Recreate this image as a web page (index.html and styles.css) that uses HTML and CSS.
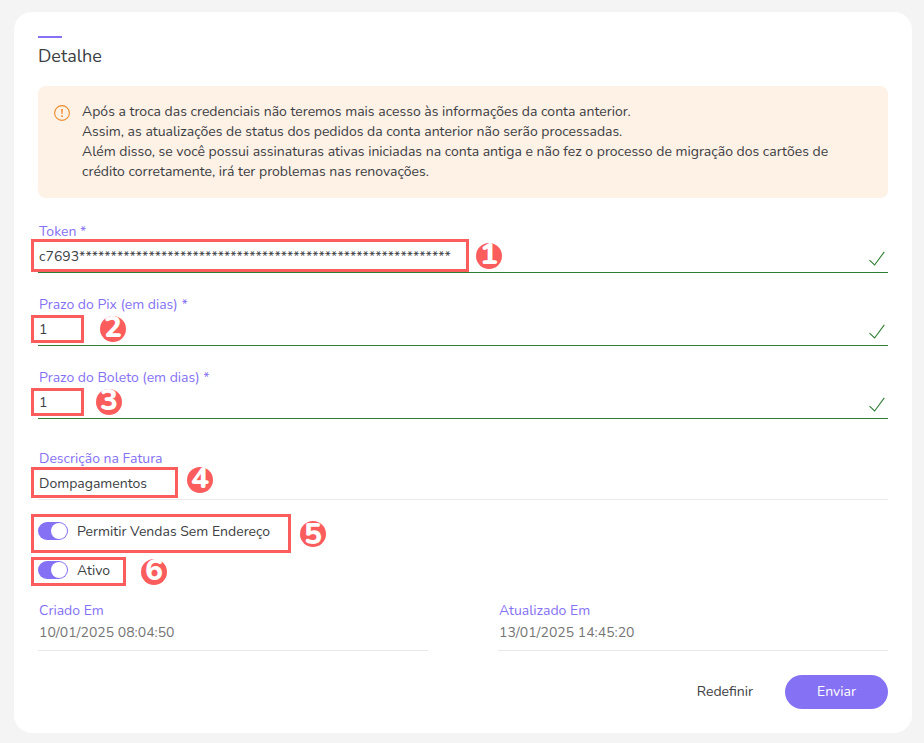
FILE: index.html
```html
<!DOCTYPE html>
<html lang="pt-BR">
<head>
<meta charset="utf-8">
<meta name="viewport" content="width=device-width, initial-scale=1">
<title>Detalhe</title>
<link rel="stylesheet" href="styles.css">
</head>
<body>
<main class="card">
  <h1 class="title">Detalhe</h1>

  <div class="alert" role="alert">
    <svg class="alert-icon" viewBox="0 0 16 16" aria-hidden="true">
      <circle cx="8" cy="8" r="7.4" fill="none" stroke="currentColor" stroke-width="1.1"/>
      <path d="M7.1 3.9h1.8l-.4 5.1h-1zM7.2 10.3h1.6v1.6H7.2z" fill="currentColor"/>
    </svg>
    <p class="alert-text">Após a troca das credenciais não teremos mais acesso às informações da conta anterior.<br>Assim, as atualizações de status dos pedidos da conta anterior não serão processadas.<br>Além disso, se você possui assinaturas ativas iniciadas na conta antiga e não fez o processo de migração dos cartões de crédito corretamente, irá ter problemas nas renovações.</p>
  </div>

  <form class="form">
    <div class="field valid">
      <label for="token">Token *</label>
      <div class="control">
        <input id="token" type="text" value="c7693***********************************************************">
        <svg class="check" viewBox="0 0 16 16" aria-hidden="true"><path d="M.5 9.2 5.6 14 15.3.8"/></svg>
      </div>
      <span class="frame frame-token"></span><span class="badge badge-token">1</span>
    </div>
    <div class="field valid">
      <label for="pix">Prazo do Pix (em dias) *</label>
      <div class="control">
        <input id="pix" type="text" value="1">
        <svg class="check" viewBox="0 0 16 16" aria-hidden="true"><path d="M.5 9.2 5.6 14 15.3.8"/></svg>
      </div>
      <span class="frame frame-days"></span><span class="badge badge-pix">2</span>
    </div>
    <div class="field valid">
      <label for="boleto">Prazo do Boleto (em dias) *</label>
      <div class="control">
        <input id="boleto" type="text" value="1">
        <svg class="check" viewBox="0 0 16 16" aria-hidden="true"><path d="M.5 9.2 5.6 14 15.3.8"/></svg>
      </div>
      <span class="frame frame-days"></span><span class="badge badge-boleto">3</span>
    </div>
    <div class="field invoice">
      <label for="fatura">Descrição na Fatura</label>
      <div class="control"><input id="fatura" type="text" value="Dompagamentos"></div>
      <span class="frame frame-invoice"></span><span class="badge badge-invoice">4</span>
    </div>

    <div class="toggles">
      <div class="toggle">
        <input id="endereco" type="checkbox" role="switch" checked>
        <label for="endereco">Permitir Vendas Sem Endereço</label>
        <span class="frame frame-address"></span><span class="badge badge-address">5</span>
      </div>
      <div class="toggle">
        <input id="ativo" type="checkbox" role="switch" checked>
        <label for="ativo">Ativo</label>
        <span class="frame frame-active"></span><span class="badge badge-active">6</span>
      </div>
    </div>

    <div class="dates">
      <div class="date">
        <label for="criado">Criado Em</label>
        <input id="criado" type="text" value="10/01/2025 08:04:50" readonly>
      </div>
      <div class="date">
        <label for="atualizado">Atualizado Em</label>
        <input id="atualizado" type="text" value="13/01/2025 14:45:20" readonly>
      </div>
    </div>

    <div class="actions">
      <button class="btn" type="reset">Redefinir</button>
      <button class="btn btn-primary" type="submit">Enviar</button>
    </div>
  </form>
</main>
</body>
</html>
```

FILE: styles.css
```css
* {
  box-sizing: border-box;
}

:root {
  --purple: #8571f4;
  --red: #fb5d5d;
  --green: #2e7d32;
  --text: #3c4043;
  --line: #e9e9e9;
}

body {
  margin: 0;
  padding: 12px 12px 10px 14px;
  background: #f4f4f4;
  color: var(--text);
  font-family: Nunito, Lato, sans-serif;
  font-size: 14px;
  line-height: 20px;
}

.card {
  padding: 24px;
  background: #fff;
  border-radius: 18px;
}

.title {
  margin: 0 0 18px;
  font-size: 18px;
  line-height: 24px;
  font-weight: 400;
}

.title::before {
  content: "";
  display: block;
  width: 24px;
  height: 2px;
  margin-bottom: 6px;
  background: var(--purple);
}

.alert {
  display: flex;
  gap: 12px;
  padding: 16px;
  background: #fef1e6;
  border-radius: 8px;
}

.alert-icon {
  flex: none;
  width: 16px;
  height: 16px;
  margin-top: 3px;
  color: #ed8b2d;
}

.alert-text {
  margin: 0;
}

.form {
  margin-top: 24px;
}

.field {
  position: relative;
  margin-bottom: 22px;
}

.field label,
.date label {
  display: block;
  color: var(--purple);
}

.control {
  display: flex;
  align-items: center;
  border-bottom: 1px solid var(--line);
}

.valid .control {
  border-color: var(--green);
}

input,
button {
  font: inherit;
  color: inherit;
}

input[type="text"] {
  flex: 1;
  width: 100%;
  min-width: 0;
  height: 30px;
  padding: 0 0 2px;
  border: 0;
  background: none;
  outline: none;
}

.field label,
.field input[type="text"],
.date label,
.date input[type="text"] {
  padding-left: 1px;
}

.check {
  width: 16px;
  height: 16px;
  margin: 4px 3px 0 0;
  fill: none;
  stroke: var(--green);
  stroke-width: 1.1;
}

.field.invoice {
  margin: 30px 0 20px;
}

.toggles {
  display: grid;
  gap: 17px;
}

.toggle {
  position: relative;
  display: flex;
  align-items: center;
  gap: 9px;
}

.toggle label {
  padding-top: 2px;
}

.toggle input {
  appearance: none;
  display: flex;
  justify-content: flex-end;
  width: 30px;
  height: 18px;
  margin: 0;
  padding: 1px;
  border-radius: 9px;
  background: var(--purple);
}

.toggle input::before {
  content: "";
  width: 16px;
  height: 16px;
  border-radius: 50%;
  background: #fff;
}

.dates {
  display: grid;
  grid-template-columns: 1fr 1fr;
  gap: 70px;
  margin-top: 20px;
}

.date input[type="text"] {
  display: block;
  padding-bottom: 6px;
  border-bottom: 1px solid var(--line);
  color: #757575;
}

.actions {
  display: flex;
  justify-content: flex-end;
  margin-top: 24px;
}

.btn {
  height: 34px;
  padding: 0 32px;
  border: 0;
  border-radius: 17px;
  background: none;
}

.btn-primary {
  background: var(--purple);
  color: #fff;
}

/* Numbered callouts laid over the fields */
.frame {
  position: absolute;
  left: -7px;
  border: 3px solid var(--red);
  pointer-events: none;
}

.badge {
  position: absolute;
  width: 26px;
  height: 26px;
  border-radius: 50%;
  background: var(--red);
  color: #fff;
  font: 800 30px/24px Nunito, Lato, sans-serif;
  text-align: center;
}

.frame-token { top: 17px; width: 438px; height: 33px; }
.frame-days { top: 20px; width: 53px; height: 28px; }
.frame-invoice { top: 18px; width: 147px; height: 31px; }
.frame-address { top: -6px; width: 260px; height: 39px; }
.frame-active { top: -2px; width: 95px; height: 29px; }

.badge-token { top: 21px; left: 438px; }
.badge-pix { top: 21px; left: 62px; }
.badge-boleto { top: 21px; left: 58px; }
.badge-invoice { top: 18px; left: 149px; }
.badge-address { top: 1px; left: 262px; line-height: 28px; }
.badge-active { top: 0; left: 103px; }
```
